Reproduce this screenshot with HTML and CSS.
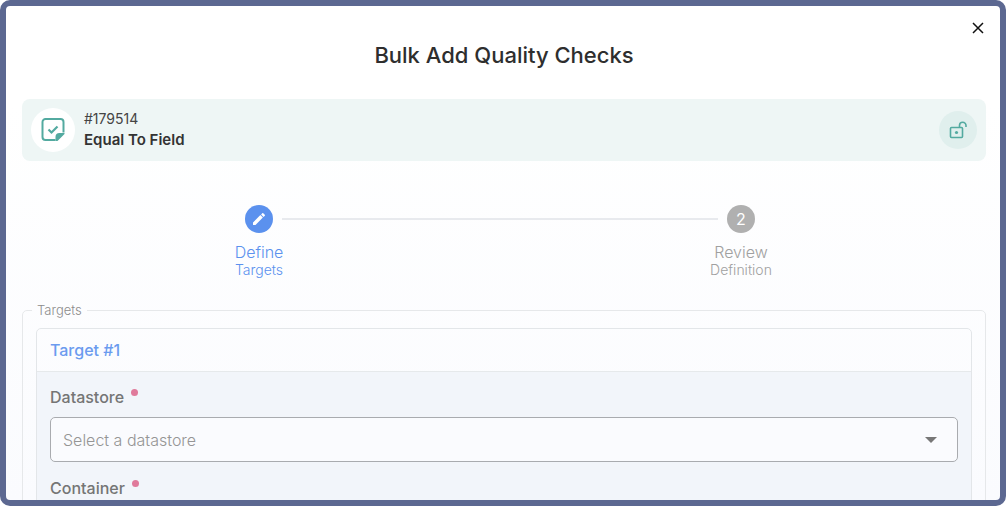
FILE: index.html
```html
<!DOCTYPE html>
<html lang="en">
<head>
<meta charset="utf-8">
<title>Bulk Add Quality Checks</title>
<meta name="viewport" content="width=device-width, initial-scale=1">
<link rel="stylesheet" href="styles.css">
</head>
<body>
<main class="dialog">
  <header class="dialog-head">
    <button class="close" type="button" aria-label="Close">
      <svg width="12" height="12" viewBox="0 0 12 12"><path d="M1 1 11 11M11 1 1 11" fill="none" stroke="currentColor" stroke-width="1.5"/></svg>
    </button>
    <h1 class="title">Bulk Add Quality Checks</h1>
  </header>

  <section class="check">
    <span class="check-icon">
      <svg width="24" height="24" viewBox="0 0 24 24"><path d="M14.500 22H4.500A3 3 0 0 1 1.500 19V4A3 3 0 0 1 4.500 1H19.500A3 3 0 0 1 22.500 4V14.500" fill="none" stroke="currentColor" stroke-width="2"/><path d="M14.500 23V19A4 4 0 0 1 18.500 15H23.500V16L16.500 23Z" fill="currentColor"/><path d="m7.500 11.500 3 3 6-6" fill="none" stroke="currentColor" stroke-width="2.200"/></svg>
    </span>
    <div class="check-text">
      <span class="check-id">#179514</span>
      <strong class="check-name">Equal To Field</strong>
    </div>
    <button class="lock" type="button" aria-label="Unlock">
      <svg width="18" height="18" viewBox="0 0 18 18" fill="none" stroke="currentColor" stroke-width="1.600"><rect x="1.500" y="6.500" width="12" height="10" rx="1"/><path d="M10.500 6.500V4.500A3.250 3.250 0 0 1 17 4.500V6"/><circle cx="7.500" cy="11.500" r="1.600" fill="currentColor" stroke="none"/></svg>
    </button>
  </section>

  <ol class="stepper">
    <li class="step step-active">
      <div class="track">
        <span class="rail"></span>
        <span class="badge"><svg width="16" height="16" viewBox="0 0 24 24"><path fill="currentColor" d="M20.700 7.040c.4-.39.4-1.040 0-1.410l-2.340-2.340c-.37-.4-1.020-.4-1.410 0l-1.840 1.830 3.750 3.750M3 17.250V21h3.750L17.810 9.930l-3.750-3.750z"/></svg></span>
        <span class="rail rail-on"></span>
      </div>
      <span class="step-name">Define</span>
      <span class="step-sub">Targets</span>
    </li>
    <li class="step">
      <div class="track">
        <span class="rail rail-on"></span>
        <span class="badge">2</span>
        <span class="rail"></span>
      </div>
      <span class="step-name">Review</span>
      <span class="step-sub">Definition</span>
    </li>
  </ol>

  <fieldset class="targets">
    <legend class="legend">Targets</legend>
    <section class="target">
      <h2 class="target-title">Target #1</h2>
      <div class="target-body">
        <label class="label" for="datastore">Datastore<span class="dot"></span></label>
        <div class="field">
          <select class="select" id="datastore" required>
            <option value="">Select a datastore</option>
          </select>
          <svg class="caret" width="12" height="6" viewBox="0 0 12 6"><path d="M0 0H12L6 6Z" fill="currentColor"/></svg>
        </div>
        <label class="label" for="container">Container<span class="dot"></span></label>
        <div class="field">
          <select class="select" id="container" required>
            <option value="">Select a container</option>
          </select>
          <svg class="caret" width="12" height="6" viewBox="0 0 12 6"><path d="M0 0H12L6 6Z" fill="currentColor"/></svg>
        </div>
      </div>
    </section>
  </fieldset>
</main>
</body>
</html>
```
FILE: styles.css
```css
* { box-sizing: border-box; }

body {
  margin: 0;
  background: #fff;
  font-family: Inter, "Liberation Sans", sans-serif;
  font-size: 16px;
  line-height: 20px;
  color: #333;
}

button { padding: 0; border: 0; cursor: pointer; }
svg { display: block; }

.dialog {
  height: 100vh;
  overflow: hidden;
  padding: 0 14px 0 16px;
  border: 6px solid #5c6891;
  border-radius: 10px;
  background: linear-gradient(#fff 20%, #fafbfe);
}

.dialog-head {
  position: relative;
  padding: 34px 0 29px;
}

.title {
  margin: 0;
  text-align: center;
  font-size: 22px;
  line-height: 30px;
  font-weight: 500;
  color: #2e2e2e;
}

.close {
  position: absolute;
  top: 16px;
  right: 2px;
  background: none;
  color: #111;
}

.check {
  display: flex;
  align-items: center;
  gap: 9px;
  padding: 9px;
  border-radius: 8px;
  background: #eef6f5;
}

.check-icon, .lock {
  display: grid;
  place-items: center;
  border-radius: 50%;
  color: #53aaa0;
}

.check-icon { width: 44px; height: 44px; background: #fff; }
.lock { width: 38px; height: 38px; background: #e0efed; }

.check-text {
  display: flex;
  flex: 1;
  flex-direction: column;
}

.check-id { font-size: 14px; color: #444; }
.check-name { font-size: 15px; font-weight: 600; line-height: 22px; }

.stepper {
  display: grid;
  grid-template-columns: 1fr 1fr;
  margin: 44px 4px 23px -4px;
  padding: 0;
  list-style: none;
}

.step {
  display: flex;
  flex-direction: column;
  align-items: center;
  color: #a0a0a0;
}

.step-active { color: #5b91ee; }

.track {
  display: flex;
  align-items: center;
  gap: 9px;
  width: 100%;
  margin-bottom: 10px;
}

.rail { flex: 1; height: 2px; }
.rail-on { background: #e8eaee; }

.badge {
  display: grid;
  place-items: center;
  width: 28px;
  height: 28px;
  border-radius: 50%;
  background: #b0b0b0;
  color: #fff;
}

.step-active .badge { background: #5b91ee; }
.step-name { font-size: 16px; line-height: 18px; }
.step-sub { font-size: 14px; line-height: 18px; }
.step-name, .step-sub { font-weight: 300; }

.targets {
  min-width: 0;
  margin: 0;
  padding: 10px 13px;
  border: 1px solid #e6e8ea;
  border-radius: 5px;
}

.legend {
  margin-left: -4px;
  padding: 0 5px;
  font-size: 13px;
  font-weight: 300;
  line-height: 16px;
  color: #8c8c8c;
}

.target {
  border: 1px solid #e3e6e9;
  border-radius: 5px;
}

.target-title {
  margin: 0;
  padding: 11px 13px;
  border-bottom: 1px solid #e6e9eb;
  font-size: 16px;
  line-height: 20px;
  font-weight: 500;
  color: #6b9bef;
}

.target-body {
  padding: 15px 13px;
  background: #f2f5fa;
}

.label {
  display: flex;
  gap: 7px;
  margin-bottom: 10px;
  font-weight: 500;
  color: #757575;
}

.dot {
  width: 7px;
  height: 7px;
  margin-top: 2px;
  border-radius: 50%;
  background: #e07a9b;
}

.field {
  position: relative;
  margin-bottom: 16px;
}

.select {
  display: block;
  width: 100%;
  height: 45px;
  padding: 0 40px 0 12px;
  border: 1px solid #a9abaf;
  border-radius: 5px;
  appearance: none;
  background: #fafbfe;
  font: inherit;
  font-weight: 300;
  color: #959595;
}

.caret {
  position: absolute;
  top: 20px;
  right: 21px;
  color: #777;
  pointer-events: none;
}
```
